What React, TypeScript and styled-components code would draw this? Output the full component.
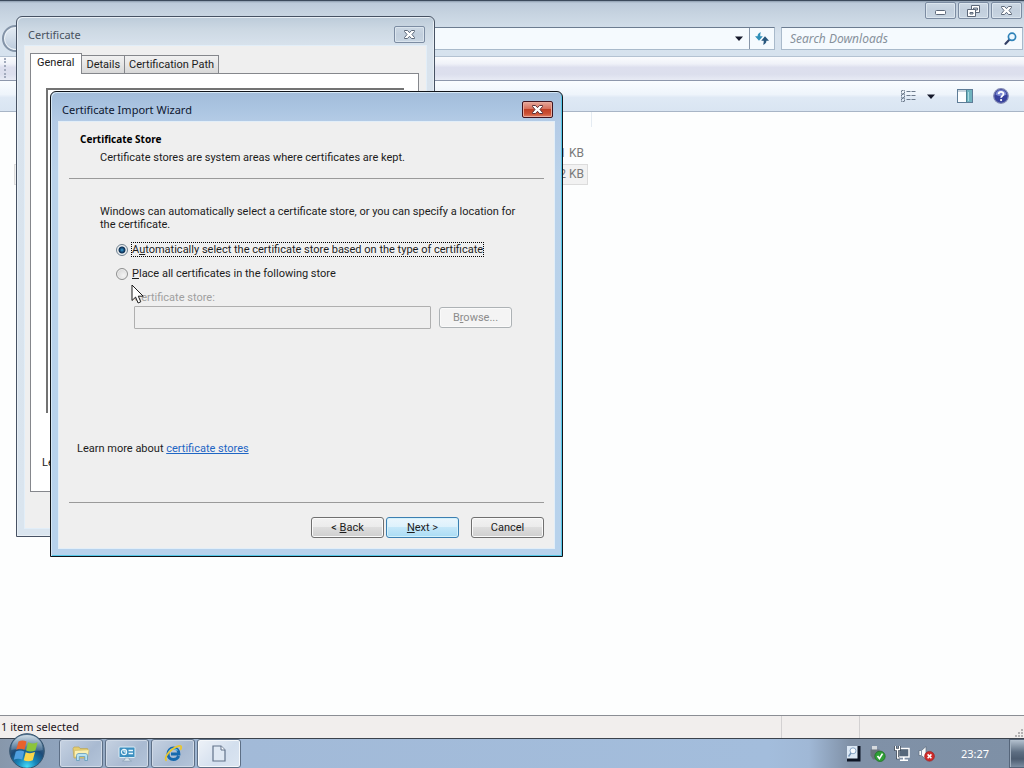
import React, { useState } from 'react';
import styled, { createGlobalStyle, css } from 'styled-components';

const bodyFont = 'Roboto, "Liberation Sans", sans-serif';
const chromeFont = '"Noto Sans", "Open Sans", sans-serif';

const GlobalStyle = createGlobalStyle`
  *, *::before, *::after { box-sizing: border-box; }
  body { margin: 0; font: 11px/13px ${bodyFont}; color: #1c1c1c; overflow: hidden; }
  button, input { font: inherit; color: inherit; margin: 0; padding: 0; }
  svg { display: block; }
`;

const Desktop = styled.div`
  position: relative;
  display: flex;
  flex-direction: column;
  height: 100vh;
  overflow: hidden;
`;

/* ---------- Explorer window ---------- */

const Explorer = styled.main`
  flex: 1;
  min-height: 0;
  display: flex;
  flex-direction: column;
  border-top: 1px solid #3c4a5c;
  font-family: ${chromeFont};
`;

const ExplorerTop = styled.header`
  background: linear-gradient(#8c9cae 0, #bccada 2px, #c6d3e0 12px, #d8e3ee 34px, #d6e2ee 100%);
`;

const CaptionRow = styled.div`
  display: flex;
  justify-content: flex-end;
  gap: 2px;
  height: 26px;
  padding: 1px 2px 0 0;
`;

const CaptionButton = styled.button<{ $close?: boolean }>`
  width: 31px;
  height: 17px;
  display: grid;
  place-items: center;
  border: 1px solid #7c8ca2;
  border-radius: 2px;
  background: linear-gradient(#ccd8e4, #c2cfdd 50%, #c8d5e2);
  box-shadow: inset 0 0 0 1px #dbe5ee;
  ${p => p.$close && css`
    border-color: #3f1420;
    background: linear-gradient(#e5a89c, #d8705c 45%, #c04026 50%, #cd5236 80%, #e08468);
    box-shadow: inset 0 0 0 1px #e9aa9d;
  `}
`;

const AddressRow = styled.div`
  display: flex;
  align-items: center;
  gap: 6px;
  height: 29px;
  padding: 0 1px 6px 2px;
`;

const BackButton = styled.button`
  width: 27px;
  height: 27px;
  flex: none;
  border: 2px solid #8494a8;
  border-radius: 50%;
  background: linear-gradient(#e4ecf4, #bccbdc);
  box-shadow: inset 0 0 0 1px #eef3f8;
`;

const fieldFrame = css`
  height: 23px;
  display: flex;
  align-items: center;
  border: 1px solid #a9bacb;
  border-top-color: #6c7c90;
  background: #f5fafe;
`;

const AddressBox = styled.div`
  ${fieldFrame}
  flex: 1;
  justify-content: flex-end;
`;

const AddressButton = styled.button<{ $divided?: boolean }>`
  width: ${p => (p.$divided ? 25 : 20)}px;
  height: 21px;
  display: grid;
  place-items: center;
  border: 0;
  border-left: ${p => (p.$divided ? '1px solid #8796a9' : '0')};
  background: transparent;
`;

const SearchBox = styled.label`
  ${fieldFrame}
  width: 242px;
  padding: 0 5px 0 8px;
`;

const SearchInput = styled.input`
  flex: 1;
  min-width: 0;
  border: 0;
  outline: 0;
  background: transparent;
  font: italic 12px/16px ${chromeFont};
  &::placeholder { color: #87919c; opacity: 1; }
`;

const MenuStrip = styled.div`
  height: 25px;
  padding: 1px 4px;
  border-top: 1px solid #b4c2d2;
  border-bottom: 1px solid #8d97ab;
  background: linear-gradient(#fbfcfe, #eff1f8 30%, #dddfee 45%, #dcdfed 75%, #e8ebf5);
`;

const Grip = styled.div`
  width: 3px;
  height: 20px;
  border-left: 2px dotted #a3abbd;
`;

const CommandBar = styled.div`
  height: 31px;
  display: flex;
  align-items: center;
  justify-content: flex-end;
  padding-right: 15px;
  border-bottom: 1px solid #a8b5c6;
  background: linear-gradient(#fafdff, #eef4fb 45%, #dfe9f5 55%, #d9e5f2);
`;

const CommandButton = styled.button<{ $gap: number }>`
  display: grid;
  place-items: center;
  border: 0;
  background: transparent;
  margin-left: ${p => p.$gap}px;
`;

const Files = styled.div`
  flex: 1;
  min-height: 0;
  padding-left: 14px;
  background: #fdfefe;
`;

const ColumnEdge = styled.div`
  width: 578px;
  height: 15px;
  margin-bottom: 16px;
  border-right: 1px solid #e4ebf2;
`;

const FileTable = styled.table`
  width: 574px;
  border-collapse: separate;
  border-spacing: 0;
  color: #7a7a7a;
  font: 12px/15px ${bodyFont};
`;

const FileRow = styled.tr<{ $selected?: boolean }>`
  td {
    height: 21px;
    padding: 0 3px;
    border: 1px solid ${p => (p.$selected ? '#dcdcdc' : 'transparent')};
    border-width: 1px 0;
    background: ${p => (p.$selected ? '#f2f2f2' : 'transparent')};
  }
  td:first-child { border-left-width: 1px; }
  td:last-child { border-right-width: 1px; text-align: right; }
`;

const StatusBar = styled.footer`
  display: flex;
  height: 24px;
  border-top: 1px solid #8b8e94;
  border-bottom: 1px solid #3b424c;
  background: #f1eeed;
  font-size: 11px;
  line-height: 22px;
  color: #1d1420;
`;

const StatusCell = styled.div<{ $width?: number }>`
  ${p => (p.$width ? `width: ${p.$width}px;` : 'flex: 1;')}
  padding-left: 1px;
  display: flex;
  align-items: flex-end;
  justify-content: ${p => (p.$width ? 'flex-end' : 'flex-start')};
  & + & { border-left: 1px solid #d3d1d2; }
`;

/* ---------- Dialog windows ---------- */

const Dialog = styled.section<{ $x: number; $y: number; $w: number; $h: number; $active?: boolean }>`
  position: absolute;
  left: ${p => p.$x}px;
  top: ${p => p.$y}px;
  width: ${p => p.$w}px;
  height: ${p => p.$h}px;
  display: flex;
  flex-direction: column;
  padding: 0 7px 7px;
  border: 1px solid ${p => (p.$active ? '#10141a' : '#475263')};
  border-radius: 6px 6px 0 0;
  background: ${p => (p.$active
    ? 'linear-gradient(#a3bcd9, #a9c3e0 14px, #b4cbe6 30px, #bad2ea 80px, #b7d2ec)'
    : 'linear-gradient(#bccbd9, #ccd8e3 12px, #d9e3ed 30px, #dae5ef)')};
  box-shadow: inset 1px 1px 0 ${p => (p.$active ? '#d5e7f5' : '#e8eff5')},
    inset -1px -1px 0 ${p => (p.$active ? '#55c8e8' : '#e8eff5')};
`;

const TitleBar = styled.header<{ $active?: boolean }>`
  flex: none;
  display: flex;
  justify-content: space-between;
  height: ${p => (p.$active ? 29 : 28)}px;
  padding: 9px 2px 0 4px;
  color: ${p => (p.$active ? '#0d1730' : '#48525e')};
  h1 { margin: 0; font: 11px/17px ${chromeFont}; }
`;

const Client = styled.div`
  flex: 1;
  min-height: 0;
  display: flex;
  flex-direction: column;
  border: 1px solid #e2eef8;
  background: #efefef;
`;

const TabRow = styled.div`
  display: flex;
  align-items: flex-end;
  height: 27px;
  padding-left: 5px;
`;

const Tab = styled.button<{ $selected?: boolean }>`
  position: relative;
  height: ${p => (p.$selected ? 21 : 18)}px;
  margin-bottom: ${p => (p.$selected ? -1 : 0)}px;
  padding: ${p => (p.$selected ? '0 7px 2px 6px' : '0 4px')};
  border: 1px solid #85878c;
  border-left-width: ${p => (p.$selected ? 1 : 0)}px;
  border-bottom: 0;
  background: ${p => (p.$selected ? '#fff' : 'linear-gradient(#f1f1f1, #e6e6e6 50%, #d8d8d8)')};
  font: 11px/16px ${bodyFont};
`;

const TabPanel = styled.div`
  flex: 1;
  margin: 0 7px 36px 5px;
  padding: 14px 14px 0 15px;
  border: 1px solid #85878c;
  background: #fff;
`;

const InfoFrame = styled.div`
  height: 325px;
  border: 2px solid #737373;
  border-right: 0;
  border-bottom: 0;
`;

const CertificateHint = styled.p`
  margin: 43px 0 0 -4px;
`;

const WizardClient = styled(Client)`
  padding: 0 10px;
`;

const WizardHeader = styled.header`
  height: 57px;
  padding: 10px 0 0 11px;
  border-bottom: 1px solid #9a9a9a;
  h2 { margin: 0; font: bold 10px/14px ${chromeFont}; color: #000; }
  p { margin: 5px 0 0 20px; }
`;

const WizardBody = styled.form`
  flex: 1;
  display: flex;
  flex-direction: column;
  padding: 26px 0 0 31px;
  border-bottom: 1px solid #9a9a9a;
`;

const Lead = styled.p`
  margin: 0 0 11px;
  max-width: 420px;
`;

const Choice = styled.label`
  display: flex;
  align-items: center;
  gap: 3px;
  height: 15px;
  margin: 0 0 9px 16px;
`;

const Radio = styled.input`
  appearance: none;
  width: 12px;
  height: 12px;
  border: 1px solid #8e8f8f;
  border-radius: 50%;
  outline: 0;
  background: radial-gradient(circle at 65% 65%, #f4f4f4, #cfcfcf);
  box-shadow: inset 0 0 0 1px #eee;
  &:checked {
    border-color: #6d7f8e;
    background: radial-gradient(circle, #3fa6d8 0, #164a78 2px, #0d2f52 3px, #e9eff3 4px);
  }
`;

const ChoiceText = styled.span<{ $focused?: boolean }>`
  height: 15px;
  border: 1px dotted ${p => (p.$focused ? '#000' : 'transparent')};
`;

const StoreLabel = styled.label`
  margin: 0 0 1px 34px;
  line-height: 15px;
  color: #a0a0a0;
`;

const StoreRow = styled.div`
  display: flex;
  align-items: center;
  gap: 8px;
  margin-left: 34px;
`;

const StoreInput = styled.input`
  width: 297px;
  height: 23px;
  border: 1px solid #afafaf;
  border-radius: 1px;
  background: #efefef;
`;

const Button = styled.button<{ $primary?: boolean }>`
  width: 73px;
  height: 21px;
  border: 1px solid #707070;
  border-radius: 3px;
  background: linear-gradient(#f2f2f2, #ebebeb 50%, #dddddd 50%, #cfcfcf);
  box-shadow: inset 0 0 0 1px #fafafa;
  ${p => p.$primary && css`
    border-color: #3c7fb1;
    background: linear-gradient(#eaf6fd, #dcf1fc 50%, #c4e7f9 50%, #aadcf4);
    box-shadow: inset 0 0 0 1px #d4f2fc;
  `}
  &:disabled {
    border-color: #adb2b5;
    background: #f4f4f4;
    color: #8c8c8c;
  }
`;

const LearnMore = styled.p`
  margin: auto 0 47px -23px;
  a { color: #1f66c4; }
`;

const WizardFooter = styled.footer`
  display: flex;
  justify-content: flex-end;
  height: 45px;
  padding-top: 14px;
  gap: 2px;
  button:last-child { margin-left: 10px; }
`;

const Pointer = styled.svg`
  position: absolute;
  left: 131px;
  top: 284px;
`;

/* ---------- Taskbar ---------- */

const Taskbar = styled.nav`
  flex: none;
  display: flex;
  height: 29px;
  background: linear-gradient(90deg, #8797ab 0, #8ea2bb 50px, #a2bad8 240px, #a3bddc 75%, #a0b8d6 79%, #8091a7 83%, #7e90a6 100%);
`;

const StartButton = styled.button`
  position: relative;
  width: 36px;
  height: 36px;
  flex: none;
  margin: -6px 14px 0 9px;
  border: 0;
  background: transparent;
`;

const TaskButton = styled.button<{ $current?: boolean }>`
  width: 44px;
  height: 29px;
  display: grid;
  place-items: center;
  margin-right: 2px;
  border: 1px solid #5d6f86;
  border-radius: 3px;
  background: ${p => (p.$current
    ? 'linear-gradient(135deg, #eef2f8, #d3dfee 60%, #dbe5f1)'
    : 'linear-gradient(135deg, #c6d2e2, #a9bad1 60%, #b4c5da)')};
  box-shadow: inset 0 0 0 1px ${p => (p.$current ? '#f5f8fb' : '#d0dae7')};
`;

const Tray = styled.div`
  display: flex;
  align-items: center;
  gap: 8px;
  margin-left: auto;
`;

const Clock = styled.time`
  width: 56px;
  margin-left: 4px;
  text-align: center;
  font: 11px/16px ${chromeFont};
  color: #fff;
`;

const ShowDesktop = styled.button`
  width: 15px;
  margin-left: 6px;
  border: 1px solid #55657a;
  border-right: 0;
  background: linear-gradient(#b4c1cf, #5d6e82 45%, #4c5c70 70%, #7b8da1);
  box-shadow: inset 1px 0 0 #a5b3c2;
`;

/* ---------- Icons ---------- */

const CrossIcon = ({ strong }: { strong?: boolean }) => (
  <svg width="13" height="11" viewBox="0 0 13 11">
    <path
      d="M1.500 1.500h3l2 2.200 2-2.200h3v1L9 5.500l2.500 3v1h-3l-2-2.200-2 2.200h-3v-1L4 5.500l-2.500-3z"
      fill="#fff"
      stroke={strong ? '#5a3038' : '#5d6879'}
    />
  </svg>
);

const MinimiseIcon = () => (
  <svg width="13" height="11" viewBox="0 0 13 11">
    <rect x="1.500" y="5.500" width="10" height="4" rx="1" fill="#fff" stroke="#5d6879" />
  </svg>
);

const RestoreIcon = () => (
  <svg width="13" height="12" viewBox="0 0 13 12" fill="#fff" stroke="#5d6879">
    <path d="M4.500 .5h8v7h-8z" />
    <path d="M6.500 3h4v2h-4z" fill="#c6d3e0" />
    <path d="M.5 4.500h8v7h-8z" />
    <path d="M3 7.500h3v1.500H3z" fill="#c6d3e0" />
  </svg>
);

const DownIcon = () => (
  <svg width="8" height="5" viewBox="0 0 8 5"><path d="M0 .5h8L4 5z" fill="#15182a" /></svg>
);

const RefreshIcon = () => (
  <svg width="14" height="13" viewBox="0 0 14 13">
    <path d="M6 .2C3.700 .8 2.600 2 2.600 4.200H0l4 4.600 3.800-4.600H5.300C5.200 2.500 5.400 1.300 6 .2z" fill="#2e8fb8" />
    <path d="M8 12.800c2.300-.6 3.400-1.800 3.400-4H14l-4-4.600-3.800 4.600h2.500c.1 1.700-.1 2.900-.7 4z" fill="#28577e" />
  </svg>
);

const SearchIcon = () => (
  <svg width="13" height="13" viewBox="0 0 13 13" fill="none">
    <path d="M1.500 11.800 5.500 7.600" stroke="#333f66" strokeWidth="2.200" strokeLinecap="round" />
    <circle cx="8" cy="4.800" r="3.600" stroke="#2f82b8" strokeWidth="1.700" fill="#eef8ff" />
  </svg>
);

const ViewIcon = () => (
  <svg width="16" height="12" viewBox="0 0 16 12" fill="none" stroke="#6c7a8c">
    <path d="M.5 .5h3v3h-3zM.5 4.500h3v3h-3zM.5 8.500h3v3h-3z" strokeDasharray="1.500 .5" />
    <path d="M5.500 1.500h10M5.500 5.500h10M5.500 9.500h10" strokeDasharray="4 1" />
  </svg>
);

const PaneIcon = () => (
  <svg width="16" height="14" viewBox="0 0 16 14">
    <rect x=".5" y=".5" width="15" height="13" fill="#fcfeff" stroke="#5e7c97" />
    <path d="M1 2h14" stroke="#93aabd" />
    <rect x="10" y="1" width="5" height="12" fill="#6fb3bf" />
    <path d="M9.500 1v12" stroke="#4d8292" />
    <path d="M11.500 3v9" stroke="#a9dbe0" />
  </svg>
);

const HelpIcon = () => (
  <svg width="16" height="16" viewBox="0 0 16 16">
    <circle cx="8" cy="8" r="7.300" fill="#37419c" stroke="#8188b4" strokeWidth="1.200" />
    <path d="M2.500 6.500a5.600 5.600 0 0 1 11 0C10 8.600 6 8.600 2.500 6.500z" fill="#7c89d2" />
    <path d="M5.600 6.100c.2-3 5-2.800 4.900-.1C10.400 7.800 8.200 7.900 8.100 9.800" fill="none" stroke="#fff" strokeWidth="1.800" />
    <circle cx="8.100" cy="12.100" r="1.100" fill="#fff" />
  </svg>
);

const ResizeGrip = () => (
  <svg width="10" height="10" viewBox="0 0 10 10" fill="#b3b1b2">
    <path d="M7 1h2v2H7zM4 4h2v2H4zM7 4h2v2H7zM1 7h2v2H1zM4 7h2v2H4zM7 7h2v2H7z" />
  </svg>
);

const StartIcon = () => (
  <svg width="36" height="36" viewBox="0 0 36 36">
    <defs>
      <radialGradient id="orb" cx=".5" cy=".95" r=".9">
        <stop offset="0" stopColor="#44dcf8" />
        <stop offset=".3" stopColor="#1786ba" />
        <stop offset=".62" stopColor="#1d4b78" />
        <stop offset="1" stopColor="#5b7c98" />
      </radialGradient>
      <linearGradient id="orbShine" x1="0" y1="0" x2="0" y2="1">
        <stop offset="0" stopColor="#e4eef5" stopOpacity=".85" />
        <stop offset="1" stopColor="#a6bfd2" stopOpacity=".25" />
      </linearGradient>
    </defs>
    <circle cx="18" cy="18" r="17.300" fill="url(#orb)" stroke="#36546e" />
    <path d="M2.300 17C2 8 9 2 18 2s16 6 15.700 15C25 20 11 14 2.300 17z" fill="url(#orbShine)" />
    <path d="M9.500 8.600c3-1.700 5.300-1.500 8 0l-2 8.200c-2.700-1.300-5.200-1.500-8.300 0z" fill="#e9622b" />
    <path d="M19 9.300c2.900 1.500 6 1.400 9.600-.1l-2.200 8.200c-3 1.400-6.500 1.500-9.300.1z" fill="#8cc43c" />
    <path d="M6.800 18.400c3-1.400 5.700-1.300 8.400 0l-2 8.200c-2.800-1.300-5.400-1.300-8.400.1z" fill="#4f9fe0" />
    <path d="M16.700 19.200c2.800 1.400 6 1.300 9.300-.1l-2.200 8.200c-3 1.400-6.300 1.300-9.100 0z" fill="#fbd64a" />
  </svg>
);

const FolderIcon = () => (
  <svg width="18" height="17" viewBox="0 0 18 17">
    <path d="M1 3.500 2 2h5l1 1.500h7.500V13H2z" fill="#e6ce6e" stroke="#b9a55a" strokeWidth=".7" />
    <path d="M2.500 5.500 17 4.800 15.600 12H2.300z" fill="#fbf0b2" stroke="#cdb868" strokeWidth=".6" />
    <path d="M4.500 15.500V10.800c0-1.600 1-2.300 2.500-2.300h6c1.600 0 2.500.8 2.500 2.300v4.700h-2.700v-4H7.300v4z" fill="#b7e2f4" stroke="#6599b8" strokeWidth=".8" />
  </svg>
);

const PanelIcon = () => (
  <svg width="18" height="16" viewBox="0 0 18 16">
    <rect x="1" y="1" width="16" height="10.500" rx="1" fill="#3b8fc0" stroke="#dcecf5" />
    <circle cx="6" cy="6" r="2.600" fill="none" stroke="#e8f6fc" strokeWidth="1.200" />
    <path d="M6 3.400V6h2.500" stroke="#f0fafe" fill="none" />
    <path d="M10.500 4.500h4.500M10.500 7.500h4.500" stroke="#eaf7fd" strokeWidth="1.300" />
    <path d="M7 12h4v1.500l2.500 1.500h-9L7 13.500z" fill="#dbe6ee" stroke="#7c94a8" strokeWidth=".5" />
  </svg>
);

const ExplorerIcon = () => (
  <svg width="18" height="17" viewBox="0 0 18 17" fill="none">
    <path d="M14.700 11c-1 2.300-3 3.500-5.200 3.500-3.300 0-5.500-2.500-5.500-5.700 0-3.300 2.300-5.700 5.500-5.700 3.400 0 5.500 2.500 5.400 6H7" stroke="#1769ae" strokeWidth="3" />
    <path d="M13.500 5.500c-1-1.200-2.300-1.700-4-1.700-2.600 0-4.500 1.700-4.800 4" stroke="#6ec4ee" strokeWidth="1.200" />
    <path d="M2.600 15.800C-.2 13.500 3.500 8 8 4.500 12.500 1.200 16.800-.3 17.200 1.800c.2 1-.4 2.200-1 3.200" stroke="#e8c632" strokeWidth="1.800" />
  </svg>
);

const PageIcon = () => (
  <svg width="14" height="17" viewBox="0 0 14 17">
    <path d="M1 1h8l4 4v11H1z" fill="#dfe8f3" stroke="#62728a" strokeWidth="1.200" />
    <path d="M9 1v4h4" fill="#f8fbfe" stroke="#62728a" />
  </svg>
);

const NotebookIcon = () => (
  <svg width="15" height="17" viewBox="0 0 15 17">
    <path d="M2 1h12.500v15.500H1V14z" fill="#0c1424" />
    <path d="M1 1h10.500v12.500H1z" fill="#dbe8f5" />
    <circle cx="7" cy="5.800" r="3" fill="#f7fbff" stroke="#87a5c4" />
    <path d="M5 8 2.500 11.500" stroke="#7392b4" strokeWidth="1.500" />
  </svg>
);

const SafeRemoveIcon = () => (
  <svg width="17" height="17" viewBox="0 0 17 17">
    <path d="M3 1h5v4H3z" fill="#d6dade" />
    <path d="M1.500 4.500h9v6l-3 4H4l-2.500-4z" fill="#6a737d" />
    <circle cx="11" cy="11.300" r="5.200" fill="#2f9f35" stroke="#1d6b23" strokeWidth=".7" />
    <path d="m8.500 11 1.900 2.600 3.100-5" fill="none" stroke="#fff" strokeWidth="1.700" />
  </svg>
);

const NetworkIcon = () => (
  <svg width="16" height="17" viewBox="0 0 16 17">
    <rect x="4.500" y="3.500" width="10.500" height="8.500" fill="#56677a" stroke="#fff" strokeWidth="1.400" />
    <path d="M9.800 12v3M6 15.300h8" stroke="#fff" strokeWidth="1.600" />
    <path d="M1.500 1v3.500h4V1M3.500 4.500v8.500h2" fill="none" stroke="#273341" strokeWidth="2.600" />
    <path d="M1.500 1v3.500h4V1M3.500 4.500v8.500h2" fill="none" stroke="#fff" strokeWidth="1.300" />
  </svg>
);

const MutedIcon = () => (
  <svg width="17" height="17" viewBox="0 0 17 17">
    <path d="M1 5.500h2.500L8 1.500v13l-4.500-4H1z" fill="#f7f9fb" stroke="#5c6a7b" strokeWidth=".7" />
    <path d="M3.500 5v6" stroke="#8393a5" />
    <circle cx="11.500" cy="11.300" r="4.900" fill="#cf2a2a" stroke="#96201f" strokeWidth=".6" />
    <path d="m9.600 9.400 3.800 3.800M13.400 9.400l-3.800 3.800" stroke="#fff" strokeWidth="1.600" />
  </svg>
);

/* ---------- Page ---------- */

const files = [
  { size: '1 KB', selected: false },
  { size: '2 KB', selected: true },
];

const tasks = [
  { label: 'Libraries', icon: <FolderIcon /> },
  { label: 'Control panel', icon: <PanelIcon /> },
  { label: 'Web browser', icon: <ExplorerIcon /> },
  { label: 'Certificate', icon: <PageIcon />, current: true },
];

function ExplorerWindow() {
  return (
    <Explorer>
      <ExplorerTop>
        <CaptionRow>
          <CaptionButton aria-label="Minimise"><MinimiseIcon /></CaptionButton>
          <CaptionButton aria-label="Restore"><RestoreIcon /></CaptionButton>
          <CaptionButton aria-label="Close"><CrossIcon /></CaptionButton>
        </CaptionRow>
        <AddressRow>
          <BackButton aria-label="Back" />
          <AddressBox>
            <AddressButton aria-label="Previous locations"><DownIcon /></AddressButton>
            <AddressButton $divided aria-label="Refresh"><RefreshIcon /></AddressButton>
          </AddressBox>
          <SearchBox>
            <SearchInput aria-label="Search" placeholder="Search Downloads" />
            <SearchIcon />
          </SearchBox>
        </AddressRow>
      </ExplorerTop>
      <MenuStrip><Grip /></MenuStrip>
      <CommandBar>
        <CommandButton $gap={0} aria-label="Change your view"><ViewIcon /></CommandButton>
        <CommandButton $gap={10} aria-label="More options"><DownIcon /></CommandButton>
        <CommandButton $gap={22} aria-label="Show the preview pane"><PaneIcon /></CommandButton>
        <CommandButton $gap={20} aria-label="Get help"><HelpIcon /></CommandButton>
      </CommandBar>
      <Files>
        <ColumnEdge />
        <FileTable>
          <tbody>
            {files.map(file => (
              <FileRow key={file.size} $selected={file.selected}>
                <td />
                <td>{file.size}</td>
              </FileRow>
            ))}
          </tbody>
        </FileTable>
      </Files>
      <StatusBar>
        <StatusCell>1 item selected</StatusCell>
        <StatusCell $width={78} />
        <StatusCell $width={165}><ResizeGrip /></StatusCell>
      </StatusBar>
    </Explorer>
  );
}

function CertificateDialog() {
  return (
    <Dialog $x={16} $y={16} $w={419} $h={521} aria-label="Certificate">
      <TitleBar>
        <h1>Certificate</h1>
        <CaptionButton aria-label="Close"><CrossIcon /></CaptionButton>
      </TitleBar>
      <Client>
        <TabRow role="tablist">
          <Tab role="tab" aria-selected $selected>General</Tab>
          <Tab role="tab">Details</Tab>
          <Tab role="tab">Certification Path</Tab>
        </TabRow>
        <TabPanel role="tabpanel">
          <InfoFrame />
          <CertificateHint>Learn</CertificateHint>
        </TabPanel>
      </Client>
    </Dialog>
  );
}

function ImportWizard() {
  const [auto, setAuto] = useState(true);
  return (
    <Dialog $x={50} $y={91} $w={513} $h={466} $active aria-label="Certificate Import Wizard">
      <TitleBar $active>
        <h1>Certificate Import Wizard</h1>
        <CaptionButton $close aria-label="Close"><CrossIcon strong /></CaptionButton>
      </TitleBar>
      <WizardClient>
        <WizardHeader>
          <h2>Certificate Store</h2>
          <p>Certificate stores are system areas where certificates are kept.</p>
        </WizardHeader>
        <WizardBody onSubmit={e => e.preventDefault()}>
          <Lead>
            Windows can automatically select a certificate store, or you can specify a location for
            the certificate.
          </Lead>
          <Choice>
            <Radio type="radio" name="store" checked={auto} onChange={() => setAuto(true)} />
            <ChoiceText $focused={auto}>
              A<u>u</u>tomatically select the certificate store based on the type of certificate
            </ChoiceText>
          </Choice>
          <Choice>
            <Radio type="radio" name="store" checked={!auto} onChange={() => setAuto(false)} />
            <ChoiceText $focused={!auto}><u>P</u>lace all certificates in the following store</ChoiceText>
          </Choice>
          <StoreLabel htmlFor="store-path">Certificate store:</StoreLabel>
          <StoreRow>
            <StoreInput id="store-path" disabled={auto} />
            <Button type="button" disabled={auto}>B<u>r</u>owse...</Button>
          </StoreRow>
          <LearnMore>Learn more about <a href="#stores">certificate stores</a></LearnMore>
        </WizardBody>
        <WizardFooter>
          <Button>&lt; <u>B</u>ack</Button>
          <Button $primary><u>N</u>ext &gt;</Button>
          <Button>Cancel</Button>
        </WizardFooter>
      </WizardClient>
    </Dialog>
  );
}

export default function App() {
  return (
    <Desktop>
      <GlobalStyle />
      <ExplorerWindow />
      <CertificateDialog />
      <ImportWizard />
      <Taskbar>
        <StartButton aria-label="Start"><StartIcon /></StartButton>
        {tasks.map(task => (
          <TaskButton key={task.label} aria-label={task.label} $current={task.current}>{task.icon}</TaskButton>
        ))}
        <Tray>
          <NotebookIcon />
          <SafeRemoveIcon />
          <NetworkIcon />
          <MutedIcon />
          <Clock>23:27</Clock>
        </Tray>
        <ShowDesktop aria-label="Show desktop" />
      </Taskbar>
      <Pointer width="13" height="21" viewBox="0 0 13 21">
        <path d="M1 1v15.500l3.600-3.400 2.500 5.900 2.700-1.200-2.500-5.600h4.900z" fill="#fff" stroke="#1b1b1b" />
      </Pointer>
    </Desktop>
  );
}
